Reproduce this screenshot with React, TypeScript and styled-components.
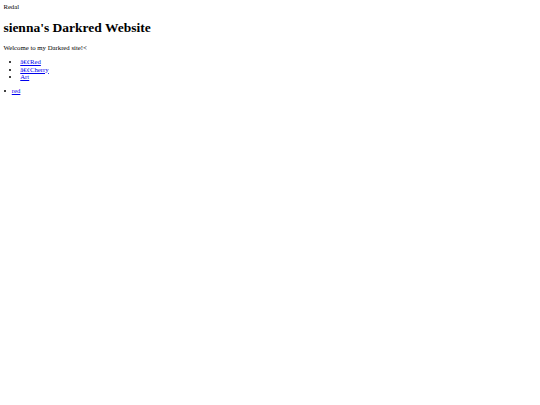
import React from 'react';
import styled, { createGlobalStyle } from 'styled-components';

// the reference is a plain 1280px page shrunk to 540px, so every size is scaled by 540/1280
const GlobalStyle = createGlobalStyle`
  html, body {
    background: #fff;
  }
  body {
    margin: 3.375px;
    font-family: 'Liberation Serif', 'Times New Roman', serif;
    font-size: 6.75px;
    line-height: 7.5px;
    color: #000;
  }
`;

const Top = styled.div``;

const Title = styled.h1`
  font-size: 13.5px;
  line-height: 15px;
  font-weight: bold;
  margin: 9.04px 0;
`;

const Text = styled.p`
  margin: 6.75px 0;
`;

const NavList = styled.ul`
  margin: 6.75px 0;
  padding-left: 16.875px;
  list-style: disc;
`;

const NavItem = styled.li``;

const LooseList = styled.ul`
  margin: 6.75px 0;
  padding-left: 0;
  list-style: none;
`;

const LooseItem = styled.li`
  display: flex;
  align-items: center;

  &::before {
    content: '';
    width: 2.6px;
    height: 2.6px;
    margin: 0 5.4px 0 0.4px;
    border-radius: 50%;
    background: #000;
  }
`;

const Link = styled.a`
  color: #0000ee;
  text-decoration: underline;
`;

const links = [
  { label: 'â€¢Red', href: '#red' },
  { label: 'â€¢Cherry', href: '#cherry' },
  { label: 'Art', href: '#art' },
];

const App = () => {
  return (
    <>
      <GlobalStyle />
      <Top>Redal</Top>
      <Title>sienna's Darkred Website</Title>
      <Text>Welcome to my Darkred site!&lt;</Text>
      <NavList>
        {links.map((link) => (
          <NavItem key={link.href}>
            <Link href={link.href}>{link.label}</Link>
          </NavItem>
        ))}
      </NavList>
      <LooseList>
        <LooseItem>
          <Link href="#red">red</Link>
        </LooseItem>
      </LooseList>
    </>
  );
};

export default App;
